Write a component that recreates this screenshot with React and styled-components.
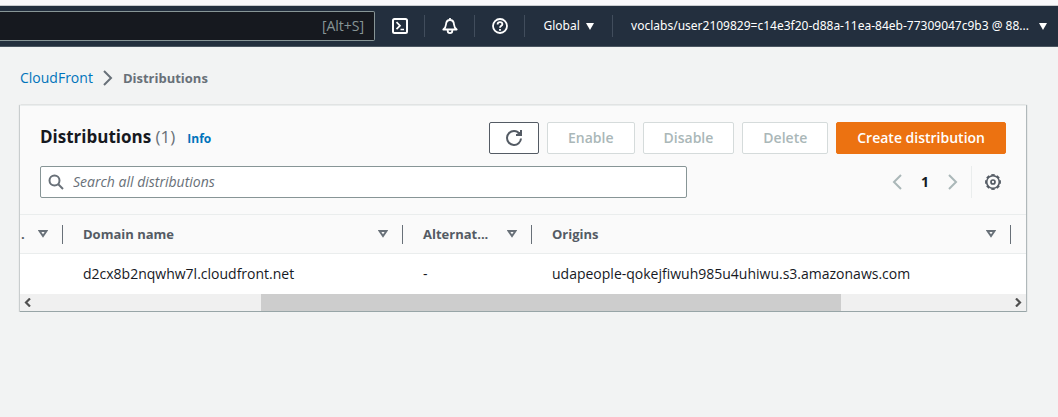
import React from "react";
import styled, { createGlobalStyle } from "styled-components";

const GlobalStyle = createGlobalStyle`
  *, *::before, *::after { box-sizing: border-box; }
  body {
    margin: 0;
    background: #f2f3f3;
    color: #16191f;
    font-family: "Open Sans", "Noto Sans", sans-serif;
    font-size: 14px;
    line-height: 20px;
  }
  button, input { font: inherit; }
`;

const TopStrip = styled.div`
  height: 6px;
  background: #f9f9fb;
  border-bottom: 1px solid #c9cccf;
`;

const NavBar = styled.header`
  display: flex;
  align-items: center;
  height: 41px;
  background: #232f3e;
  border-bottom: 1px solid #4b5661;
`;

const NavSearch = styled.label`
  display: flex;
  align-items: center;
  flex: 1;
  min-width: 0;
  height: 30px;
  padding-right: 10px;
  background: #16191f;
  border: 1px solid #879596;
  border-left: 0;
  border-radius: 0 2px 2px 0;
  color: #879596;
`;

const NavSearchInput = styled.input`
  flex: 1;
  min-width: 0;
  background: transparent;
  border: 0;
  outline: 0;
  color: #fff;
`;

const NavItem = styled.div`
  display: flex;
  align-items: center;
  justify-content: center;
  width: ${(p) => p.$width};
  height: 22px;
  border-right: ${(p) => (p.$last ? "0" : "1px solid #414d5c")};
`;

const NavButton = styled.button`
  display: flex;
  align-items: center;
  gap: ${(p) => (p.$wide ? "10px" : "6px")};
  padding: ${(p) => (p.$wide ? "0 11px 0 18px" : "0")};
  border: 0;
  background: transparent;
  color: #fff;
  font-family: "Noto Sans", "Open Sans", sans-serif;
  font-size: 12px;
  line-height: 20px;
  white-space: nowrap;
`;

const Breadcrumbs = styled.nav`
  display: flex;
  align-items: center;
  gap: 7px;
  padding: 21px 20px 0;
  color: #687078;
`;

const CrumbLink = styled.a`
  color: #0073bb;
  text-decoration: none;
`;

const CrumbCurrent = styled.span`
  font-size: 13px;
  font-weight: 700;
`;

const Panel = styled.main`
  margin: 17px 32px 0 20px;
  background: #fff;
  box-shadow: 0 1px 1px 0 rgba(0, 28, 36, 0.15), 1px 0 1px 0 rgba(0, 28, 36, 0.25),
    -1px 0 1px 0 rgba(0, 28, 36, 0.15);
  border-top: 1px solid #eaeded;
  border-bottom: 1px solid #98a5a7;
`;

const PanelHeader = styled.div`
  display: flex;
  flex-direction: column;
  gap: 12px;
  padding: 16px 20px;
  background: #fafafa;
  border-bottom: 1px solid #eaeded;
`;

const HeaderRow = styled.div`
  display: flex;
  align-items: center;
  justify-content: space-between;
`;

const TitleGroup = styled.div`
  display: flex;
  align-items: baseline;
  gap: 12px;
  padding-bottom: 2px;
`;

const Title = styled.h1`
  margin: 0;
  font-size: 17px;
  line-height: 24px;
  font-weight: 700;
`;

const Count = styled.span`
  color: #687078;
  font-weight: 400;
`;

const InfoLink = styled.a`
  color: #0073bb;
  font-size: 12px;
  font-weight: 700;
  text-decoration: none;
`;

const Actions = styled.div`
  display: flex;
  gap: 8px;
`;

const ActionButton = styled.button`
  display: flex;
  align-items: center;
  justify-content: center;
  height: 32px;
  padding: 0 ${(p) => (p.$icon ? "16px" : "20px")};
  border: 1px solid ${(p) => (p.$primary ? "#ec7211" : "#545b64")};
  border-radius: 2px;
  background: ${(p) => (p.$primary ? "#ec7211" : "#fff")};
  color: ${(p) => (p.$primary ? "#fff" : "#545b64")};
  font-weight: 600;
  white-space: nowrap;

  &:disabled {
    border-color: #d5dbdb;
    color: #aab7b8;
  }
`;

const SearchField = styled.label`
  display: flex;
  align-items: center;
  gap: 9px;
  width: 67%;
  height: 32px;
  padding: 0 7px;
  border: 1px solid #879596;
  border-radius: 2px;
  background: #fff;
  color: #687078;
`;

const SearchInput = styled.input`
  flex: 1;
  min-width: 0;
  padding: 0;
  border: 0;
  outline: 0;
  background: transparent;
  color: #16191f;

  &::placeholder {
    color: #687078;
    font-style: italic;
    opacity: 1;
  }
`;

const Pager = styled.div`
  display: flex;
  align-items: center;
  height: 32px;
`;

const PageButton = styled.button`
  display: flex;
  align-items: center;
  justify-content: center;
  width: 28px;
  height: 32px;
  padding: 0;
  border: 0;
  background: transparent;
  color: ${(p) => (p.$current ? "#16191f" : "#aab7b8")};
  font-weight: 700;
`;

const Preferences = styled.div`
  display: flex;
  align-items: center;
  height: 32px;
  margin-left: 4px;
  padding: 0 5px 0 13px;
  border-left: 1px solid #eaeded;
`;

const PreferencesButton = styled.button`
  display: flex;
  padding: 0;
  border: 0;
  background: transparent;
  color: #545b64;
`;

const Table = styled.table`
  width: 100%;
  table-layout: fixed;
  border-collapse: separate;
  border-spacing: 0;
`;

const HeadCell = styled.th`
  width: ${(p) => p.$width || "auto"};
  height: 39px;
  padding: 0 0 0 ${(p) => (p.$clipped ? "1px" : "20px")};
  background: #fafafa;
  border-bottom: 1px solid #eaeded;
  color: #545b64;
  font-size: 13px;
  font-weight: 700;
  text-align: left;
`;

const HeadEnd = styled.td`
  width: 15px;
  padding: 0;
  background: #fafafa;
  border-bottom: 1px solid #eaeded;
`;

const HeadContent = styled.div`
  display: flex;
  align-items: center;
  justify-content: space-between;
  height: 19px;
  padding-right: 14px;
  border-right: 1px solid #687078;
`;

const Cell = styled.td`
  height: 40px;
  padding: 0 0 0 ${(p) => (p.$bare ? "0" : "20px")};
  white-space: nowrap;
`;

const ScrollBar = styled.div`
  display: flex;
  height: 17px;
  background: #f0f0f0;
  color: #505050;
`;

const ScrollArrow = styled.button`
  display: flex;
  align-items: center;
  justify-content: center;
  width: 17px;
  padding: 0;
  border: 0;
  background: transparent;
  color: inherit;
`;

const ScrollTrack = styled.div`
  display: flex;
  flex: 1;
`;

const TrackPart = styled.div`
  flex: ${(p) => p.$share};
  background: ${(p) => (p.$thumb ? "#cdcdcd" : "transparent")};
`;

const Chevron = ({ left }) => (
  <svg width="16" height="16" viewBox="0 0 16 16" fill="none" stroke="currentColor" strokeWidth="2">
    <path d={left ? "M12 1L5 8l7 7" : "M4 1l7 7-7 7"} />
  </svg>
);

const ScrollChevron = ({ left }) => (
  <svg width="9" height="9" viewBox="0 0 9 9" fill="none" stroke="currentColor" strokeWidth="2.200">
    <path d={left ? "M6 .5L2 4.500l4 4" : "M3 .5l4 4-4 4"} />
  </svg>
);

const Caret = () => (
  <svg width="8" height="7" viewBox="0 0 8 7" fill="currentColor">
    <path d="M0 0h8L4 7z" />
  </svg>
);

const SortIcon = () => (
  <svg width="10" height="8" viewBox="0 0 10 8" fill="none" stroke="#687078" strokeWidth="2">
    <path d="M1.500 1h7L5 6z" />
  </svg>
);

const TerminalIcon = () => (
  <svg width="16" height="16" viewBox="0 0 16 16" fill="none" stroke="currentColor" strokeWidth="2">
    <rect x="1" y="1" width="14" height="14" rx="1.500" />
    <path d="M4.500 4.200L8 7.700l-3.500 3.500M8.500 11.500H12" strokeWidth="1.700" />
  </svg>
);

const BellIcon = () => (
  <svg width="16" height="16" viewBox="0 0 16 16" fill="none" stroke="currentColor" strokeWidth="1.800" strokeLinejoin="round">
    <path d="M8 0v2M1.300 11.500C3 10.300 3.800 9 4 6.500 4.200 3.500 5.800 2 8 2s3.800 1.500 4 4.500c.2 2.500 1 3.800 2.700 5z" />
    <path d="M5.700 12v.8a2.300 2.300 0 004.600 0V12" />
  </svg>
);

const HelpIcon = () => (
  <svg width="16" height="16" viewBox="0 0 16 16" fill="none" stroke="currentColor" strokeWidth="1.800">
    <circle cx="8" cy="8" r="7" />
    <path d="M5.600 6.500C5.600 4.900 6.600 4.200 8 4.200s2.400.8 2.400 2.100C10.400 7.900 8 7.800 8 9.800" />
    <path d="M8 10.900v1.800" />
  </svg>
);

const RefreshIcon = () => (
  <svg width="16" height="16" viewBox="0 0 16 16" fill="none" stroke="currentColor" strokeWidth="2">
    <path d="M15 8.500A7 7 0 118 1c2.700 0 4.700 1.300 6 3.800" />
    <path d="M15 0v5H10M15 1.500L11.500 5" />
  </svg>
);

const SearchIcon = () => (
  <svg width="16" height="16" viewBox="0 0 16 16" fill="none" stroke="currentColor" strokeWidth="2">
    <circle cx="6.500" cy="6.500" r="5" />
    <path d="M10 10l5 5" />
  </svg>
);

const teeth = Array.from({ length: 8 }, (_, i) => i * 45);

const GearIcon = () => (
  <svg width="16" height="16" viewBox="0 0 16 16" fill="none" stroke="currentColor">
    <circle cx="8" cy="8" r="6.300" strokeWidth="1.600" />
    <circle cx="8" cy="8" r="2" strokeWidth="1.700" />
    {teeth.map((angle) => (
      <path key={angle} d="M6.300 .9h3.400" strokeWidth="1.600" transform={`rotate(${angle} 8 8)`} />
    ))}
  </svg>
);

const columns = [
  { label: ".", width: "43px", clipped: true },
  { label: "Domain name", width: "340px" },
  { label: "Alternat...", width: "129px" },
  { label: "Origins" },
];

export default function App() {
  return (
    <>
      <GlobalStyle />
      <TopStrip />
      <NavBar>
        <NavSearch>
          <NavSearchInput aria-label="Search services" />
          [Alt+S]
        </NavSearch>
        <NavItem $width="50px">
          <NavButton aria-label="CloudShell"><TerminalIcon /></NavButton>
        </NavItem>
        <NavItem $width="50px">
          <NavButton aria-label="Notifications"><BellIcon /></NavButton>
        </NavItem>
        <NavItem $width="50px">
          <NavButton aria-label="Help"><HelpIcon /></NavButton>
        </NavItem>
        <NavItem $width="88px">
          <NavButton>Global <Caret /></NavButton>
        </NavItem>
        <NavItem $last>
          <NavButton $wide>
            voclabs/user2109829=c14e3f20-d88a-11ea-84eb-77309047c9b3 @ 88... <Caret />
          </NavButton>
        </NavItem>
      </NavBar>

      <Breadcrumbs aria-label="Breadcrumbs">
        <CrumbLink href="#cloudfront">CloudFront</CrumbLink>
        <Chevron />
        <CrumbCurrent>Distributions</CrumbCurrent>
      </Breadcrumbs>

      <Panel>
        <PanelHeader>
          <HeaderRow>
            <TitleGroup>
              <Title>Distributions <Count>(1)</Count></Title>
              <InfoLink href="#info">Info</InfoLink>
            </TitleGroup>
            <Actions>
              <ActionButton $icon aria-label="Refresh"><RefreshIcon /></ActionButton>
              <ActionButton disabled>Enable</ActionButton>
              <ActionButton disabled>Disable</ActionButton>
              <ActionButton disabled>Delete</ActionButton>
              <ActionButton $primary>Create distribution</ActionButton>
            </Actions>
          </HeaderRow>
          <HeaderRow>
            <SearchField>
              <SearchIcon />
              <SearchInput aria-label="Search" placeholder="Search all distributions" />
            </SearchField>
            <Pager>
              <PageButton aria-label="Previous page" disabled><Chevron left /></PageButton>
              <PageButton $current>1</PageButton>
              <PageButton aria-label="Next page" disabled><Chevron /></PageButton>
              <Preferences>
                <PreferencesButton aria-label="Preferences"><GearIcon /></PreferencesButton>
              </Preferences>
            </Pager>
          </HeaderRow>
        </PanelHeader>

        <Table>
          <thead>
            <tr>
              {columns.map((c) => (
                <HeadCell key={c.label} $width={c.width} $clipped={c.clipped}>
                  <HeadContent>{c.label}<SortIcon /></HeadContent>
                </HeadCell>
              ))}
              <HeadEnd />
            </tr>
          </thead>
          <tbody>
            <tr>
              <Cell />
              <Cell>d2cx8b2nqwhw7l.cloudfront.net</Cell>
              <Cell>-</Cell>
              <Cell>udapeople-qokejfiwuh985u4uhiwu.s3.amazonaws.com</Cell>
              <Cell $bare />
            </tr>
          </tbody>
        </Table>

        <ScrollBar>
          <ScrollArrow aria-label="Scroll left"><ScrollChevron left /></ScrollArrow>
          <ScrollTrack>
            <TrackPart $share={224} />
            <TrackPart $share={580} $thumb />
            <TrackPart $share={168} />
          </ScrollTrack>
          <ScrollArrow aria-label="Scroll right"><ScrollChevron /></ScrollArrow>
        </ScrollBar>
      </Panel>
    </>
  );
}
